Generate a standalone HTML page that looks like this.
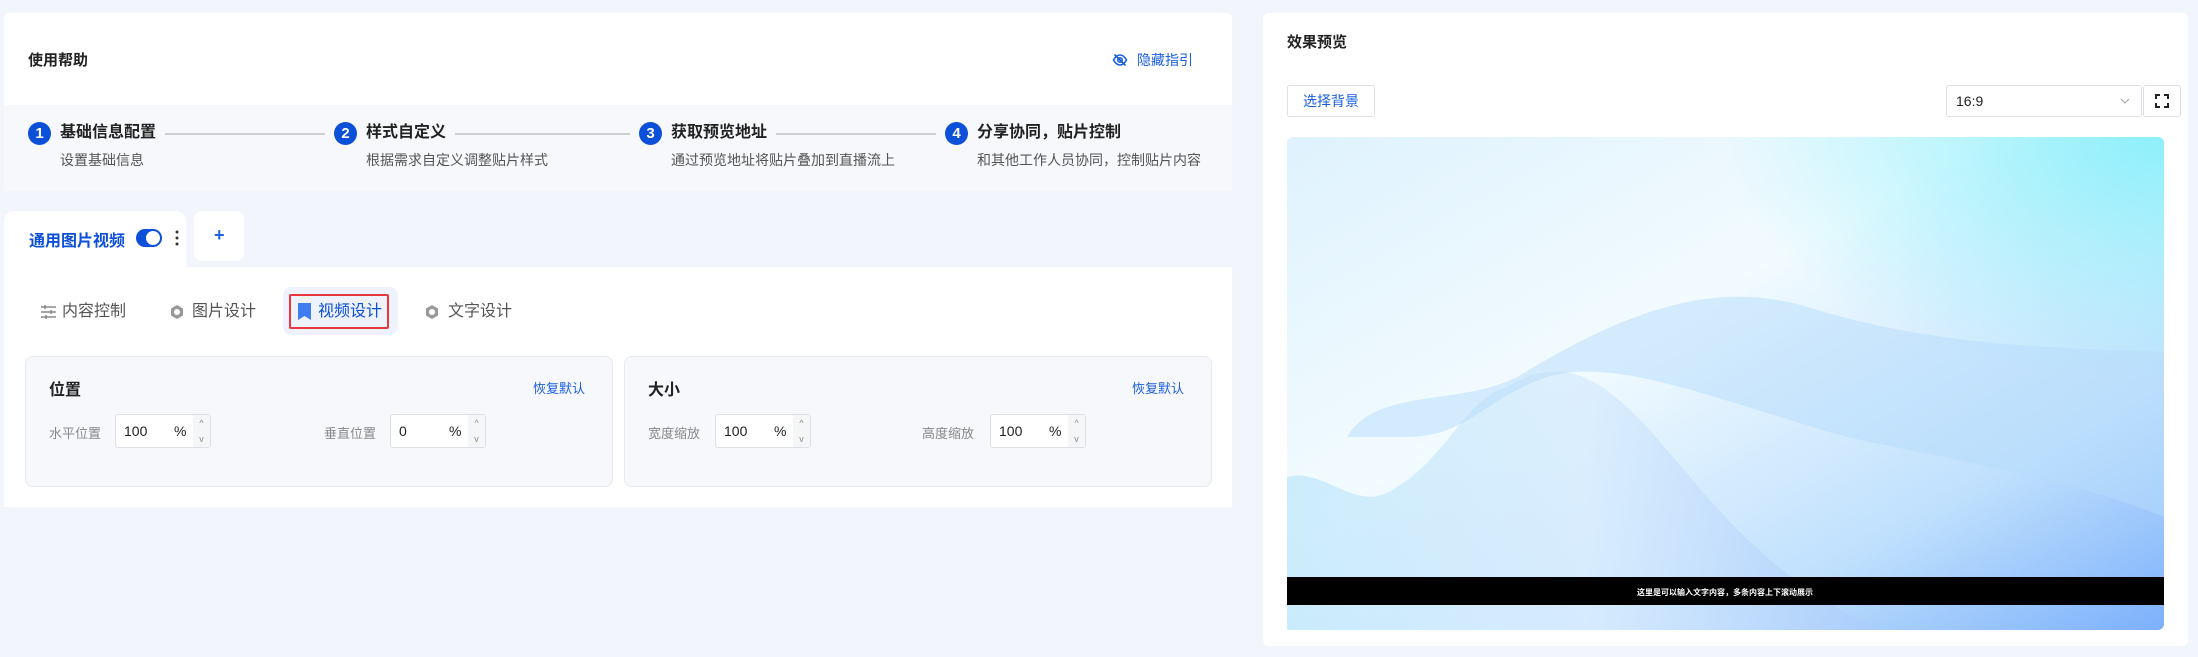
<!DOCTYPE html>
<html><head><meta charset="utf-8"><style>
*{box-sizing:border-box;margin:0;padding:0}
body{width:2198px;height:657px;background:#f2f5fc;font-family:"Liberation Sans","Noto Sans CJK SC",sans-serif;position:relative;overflow:hidden;color:#222}
.abs{position:absolute}
.blue{color:#1a5fe0}
.circ{position:absolute;width:23px;height:23px;border-radius:50%;background:#0c4fd8;color:#fff;font-weight:bold;font-size:15px;text-align:center;line-height:23px;top:122px}
.st{position:absolute;top:121px;font-size:16px;font-weight:bold;color:#222;line-height:24px}
.ss{position:absolute;top:151px;font-size:14px;color:#555;line-height:18px}
.ln{position:absolute;top:133px;height:2px;background:#cfcfcf}
.card{position:absolute;top:356px;height:131px;background:#f7f8fc;border:1px solid #e6e9f0;border-radius:8px}
.ct{position:absolute;top:19px;font-size:16px;font-weight:bold;color:#222}
.rd{position:absolute;top:21px;font-size:13px;color:#1a5fe0}
.lb{position:absolute;top:66px;font-size:13px;color:#888}
.inp{position:absolute;top:57px;width:96px;height:34px;background:#fff;border:1px solid #dcdfe6;border-radius:3px;font-size:14px}
.inp .v{position:absolute;left:8px;top:8px;color:#222}
.inp .p{position:absolute;left:58px;top:8px;color:#222}
.inp .s{position:absolute;right:0;top:0;width:17px;height:32px;background:#f5f6f8;font-size:9px;color:#888;text-align:center;line-height:16px}
.tab{position:absolute;top:301px;font-size:16px;color:#555;line-height:22px}
</style></head><body>
<div class="abs" style="left:4px;top:13px;width:1228px;height:178px;background:#fff;border-radius:6px 6px 0 0"></div>
<div class="abs" style="left:4px;top:105px;width:1228px;height:86px;background:#f7f8fc"></div>
<div class="abs" style="left:28px;top:49px;font-size:15px;font-weight:bold;color:#222">使用帮助</div>
<svg class="abs" style="left:1112px;top:52px" width="16" height="16" viewBox="0 0 16 16" fill="none" stroke="#1a5fe0" stroke-width="1.6"><path d="M1.5 8c2-3.5 4-5 6.5-5s4.5 1.5 6.5 5c-2 3.5-4 5-6.5 5S3.5 11.5 1.5 8z"/><circle cx="8" cy="8" r="2.2"/><path d="M2.5 2.5l11 11"/></svg>
<div class="abs blue" style="left:1137px;top:50px;font-size:14px">隐藏指引</div>

<div class="circ" style="left:28px">1</div><div class="st" style="left:60px">基础信息配置</div><div class="ln" style="left:165px;width:160px"></div><div class="ss" style="left:60px">设置基础信息</div>
<div class="circ" style="left:334px">2</div><div class="st" style="left:366px">样式自定义</div><div class="ln" style="left:455px;width:175px"></div><div class="ss" style="left:366px">根据需求自定义调整贴片样式</div>
<div class="circ" style="left:639px">3</div><div class="st" style="left:671px">获取预览地址</div><div class="ln" style="left:776px;width:160px"></div><div class="ss" style="left:671px">通过预览地址将贴片叠加到直播流上</div>
<div class="circ" style="left:945px">4</div><div class="st" style="left:977px">分享协同，贴片控制</div><div class="ss" style="left:977px">和其他工作人员协同，控制贴片内容</div>

<div class="abs" style="left:4px;top:211px;width:182px;height:60px;background:#fff;border-radius:10px 10px 0 0"></div>
<div class="abs" style="left:194px;top:211px;width:50px;height:50px;background:#fff;border-radius:8px"></div>
<div class="abs blue" style="left:214px;top:225px;font-size:18px;font-weight:bold">+</div>
<div class="abs" style="left:29px;top:227px;font-size:16px;font-weight:bold;color:#0c4fd8">通用图片视频</div>
<div class="abs" style="left:136px;top:229px;width:26px;height:18px;border-radius:9px;background:#0c4fd8"><div style="position:absolute;right:2px;top:2px;width:14px;height:14px;border-radius:50%;background:#fff"></div></div>
<svg class="abs" style="left:175px;top:230px" width="4" height="16"><circle cx="2" cy="2" r="1.5" fill="#333"/><circle cx="2" cy="8" r="1.5" fill="#333"/><circle cx="2" cy="14" r="1.5" fill="#333"/></svg>
<div class="abs" style="left:4px;top:267px;width:1228px;height:240px;background:#fff"></div>

<svg class="abs" style="left:40px;top:304px" width="17" height="16" viewBox="0 0 17 16" stroke="#888" stroke-width="1.5" fill="none"><path d="M1 3h15M1 8h15M1 13h15"/><path d="M5 1v4M11 6v4M6 11v4"/></svg>
<div class="tab" style="left:62px">内容控制</div>
<svg class="abs" style="left:169px;top:304px" width="16" height="16" viewBox="0 0 16 16"><path d="M8 1l6 3.5v7L8 15l-6-3.5v-7z" fill="#999"/><circle cx="8" cy="8" r="3" fill="#fff"/></svg>
<div class="tab" style="left:192px">图片设计</div>
<div class="abs" style="left:283px;top:287px;width:115px;height:48px;background:#eef2fd;border-radius:8px"></div>
<div class="abs" style="left:289px;top:294px;width:100px;height:35px;border:2px solid #e8383d;border-radius:2px"></div>
<svg class="abs" style="left:298px;top:303px" width="13" height="17" viewBox="0 0 13 17"><path d="M0 0h13v17l-6.5-4L0 17z" fill="#3f7cf0"/></svg>
<div class="tab blue" style="left:318px;color:#0c4fd8">视频设计</div>
<svg class="abs" style="left:424px;top:304px" width="16" height="16" viewBox="0 0 16 16"><path d="M8 1l6 3.5v7L8 15l-6-3.5v-7z" fill="#999"/><circle cx="8" cy="8" r="3" fill="#fff"/></svg>
<div class="tab" style="left:448px">文字设计</div>

<div class="card" style="left:25px;width:588px">
 <div class="ct" style="left:23px">位置</div><div class="rd" style="left:507px">恢复默认</div>
 <div class="lb" style="left:23px">水平位置</div>
 <div class="inp" style="left:89px"><span class="v">100</span><span class="p">%</span><div class="s">^<br>v</div></div>
 <div class="lb" style="left:298px">垂直位置</div>
 <div class="inp" style="left:364px"><span class="v">0</span><span class="p">%</span><div class="s">^<br>v</div></div>
</div>
<div class="card" style="left:624px;width:588px">
 <div class="ct" style="left:23px">大小</div><div class="rd" style="left:507px">恢复默认</div>
 <div class="lb" style="left:23px">宽度缩放</div>
 <div class="inp" style="left:90px"><span class="v">100</span><span class="p">%</span><div class="s">^<br>v</div></div>
 <div class="lb" style="left:297px">高度缩放</div>
 <div class="inp" style="left:365px"><span class="v">100</span><span class="p">%</span><div class="s">^<br>v</div></div>
</div>

<div class="abs" style="left:1263px;top:13px;width:925px;height:633px;background:#fff;border-radius:6px"></div>
<div class="abs" style="left:1287px;top:31px;font-size:15px;font-weight:bold;color:#222">效果预览</div>
<div class="abs blue" style="left:1287px;top:85px;width:88px;height:32px;border:1px solid #dcdfe6;border-radius:3px;font-size:14px;text-align:center;line-height:30px">选择背景</div>
<div class="abs" style="left:1946px;top:85px;width:196px;height:32px;border:1px solid #dcdfe6;border-radius:3px;font-size:14px;line-height:30px;padding-left:9px;color:#222">16:9</div>
<svg class="abs" style="left:2120px;top:97px" width="10" height="8" viewBox="0 0 10 8" fill="none" stroke="#aaa" stroke-width="1.2"><path d="M1 2l4 4 4-4"/></svg>
<div class="abs" style="left:2143px;top:85px;width:38px;height:32px;border:1px solid #dcdfe6;border-radius:3px"></div>
<svg class="abs" style="left:2155px;top:94px" width="14" height="14" viewBox="0 0 14 14" fill="none" stroke="#222" stroke-width="2"><path d="M1 5V1h4M9 1h4v4M13 9v4H9M5 13H1V9"/></svg>
<svg class="abs" style="left:1287px;top:137px" width="877" height="493" viewBox="0 0 877 493">
<defs>
<linearGradient id="g1" x1="0" y1="0" x2="1" y2="1"><stop offset="0" stop-color="#dff2fd"/><stop offset=".4" stop-color="#f2fbff"/><stop offset=".75" stop-color="#bfe0fd"/><stop offset="1" stop-color="#7cb0fb"/></linearGradient>
<linearGradient id="g2" x1="0" y1="0" x2="1" y2="0"><stop offset="0" stop-color="#c3e9fb"/><stop offset=".5" stop-color="#d8ecfd"/><stop offset="1" stop-color="#a9cbfc"/></linearGradient>
<radialGradient id="g3" cx="1" cy="0" r=".5"><stop offset="0" stop-color="#8df0fb"/><stop offset="1" stop-color="#8df0fb" stop-opacity="0"/></radialGradient>
</defs>
<rect width="877" height="493" rx="6" fill="url(#g1)"/>
<rect width="877" height="493" rx="6" fill="url(#g3)"/>
<path d="M0 340C40 330 70 380 110 350 160 320 180 260 220 250 300 200 350 280 420 360 500 450 560 480 600 493L0 493z" fill="url(#g2)" opacity=".8"/>
<path d="M60 300C90 250 170 270 230 240 330 180 420 140 520 170 650 210 760 210 877 215L877 380C780 340 650 320 560 300 420 260 330 220 260 240 200 260 180 300 120 300z" fill="#b5dcfc" opacity=".5"/>
<rect x="0" y="440" width="877" height="28" fill="#000"/>
<text x="438" y="458" fill="#fff" font-size="8" text-anchor="middle" font-family="Liberation Sans, Noto Sans CJK SC, sans-serif" font-weight="bold">这里是可以输入文字内容，多条内容上下滚动展示</text>
</svg>
</body></html>
